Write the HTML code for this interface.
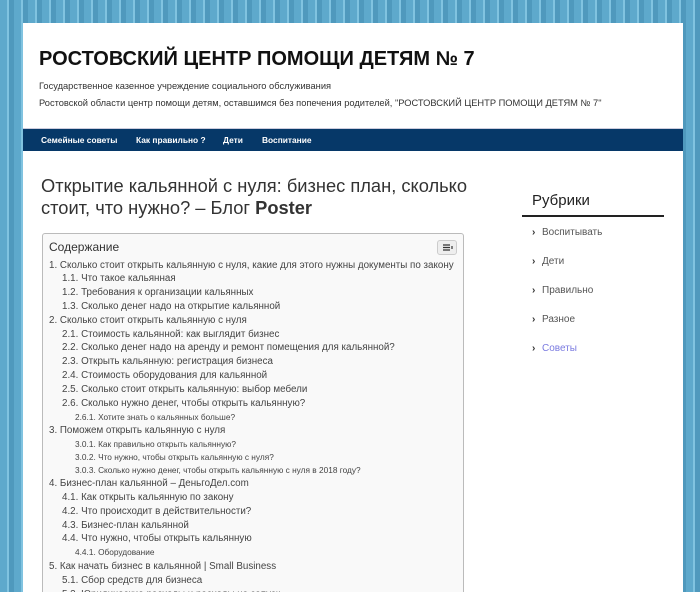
<!DOCTYPE html>
<html><head><meta charset="utf-8"><style>
*{margin:0;padding:0;box-sizing:border-box}
html,body{width:700px;height:592px;overflow:hidden}
body{position:relative;font-family:"Liberation Sans",sans-serif;
background:repeating-linear-gradient(90deg,#5ea9cc 0,#5ea9cc 7px,#80c3e0 7px,#80c3e0 9px,#4f99bd 9px,#4f99bd 14px);}
.page{position:absolute;left:23px;top:23px;width:660px;height:569px;background:#fff;overflow:hidden}
h1{position:absolute;left:16px;top:25px;font-size:20px;font-weight:bold;color:#111}
.d{position:absolute;left:16px;font-size:9.3px;color:#333}
.nav{position:absolute;left:0;top:105px;width:660px;height:23px;background:#063868;border-top:1px solid #ccd}
.nav span{position:absolute;top:6px;font-size:8.4px;font-weight:bold;color:#fff}
.t{position:absolute;left:18px;top:152px;font-size:18.3px;color:#333;line-height:22px;width:445px}
.toc{position:absolute;left:19px;top:210px;width:422px;height:400px;background:#f9f9f9;border:1px solid #bbb;border-radius:3px}
.toc h3{position:absolute;left:6px;top:6px;font-size:12px;font-weight:normal;color:#333}
.btn{position:absolute;left:394px;top:6px;width:20px;height:15px;border:1px solid #ccc;border-radius:3px;background:#eee}
.toc div.i{position:absolute;font-size:9.8px;color:#444;white-space:nowrap}
.toc div.s{font-size:8.3px}
.side{position:absolute;left:532px;top:192px;font-size:15px;font-weight:normal;color:#222}
.bar{position:absolute;left:522px;top:215px;width:142px;height:2px;background:#222}
.li{position:absolute;left:542px;font-size:10px;color:#555}
.li:before{content:"›";position:absolute;left:-10px;font-weight:bold;color:#333}
</style></head><body>
<div class="page">
<h1>РОСТОВСКИЙ ЦЕНТР ПОМОЩИ ДЕТЯМ № 7</h1>
<div class="d" style="top:58px">Государственное казенное учреждение социального обслуживания</div>
<div class="d" style="top:75px">Ростовской области центр помощи детям, оставшимся без попечения родителей, "РОСТОВСКИЙ ЦЕНТР ПОМОЩИ ДЕТЯМ № 7"</div>
<div class="nav"><span style="left:18px">Семейные советы</span><span style="left:113px">Как правильно ?</span><span style="left:200px">Дети</span><span style="left:239px">Воспитание</span></div>
<div class="t">Открытие кальянной с нуля: бизнес план, сколько стоит, что нужно? – Блог <b>Poster</b></div>
<div class="toc"><h3>Содержание</h3><div class="btn"><svg width="18" height="13"><g stroke="#333" stroke-width="1.2"><path d="M5 4h7M5 6.5h7M5 9h7M14 5v3"/></g></svg></div>
<div class="i" style="left:6px;top:26px">1. Сколько стоит открыть кальянную с нуля, какие для этого нужны документы по закону</div>
<div class="i" style="left:19px;top:39px">1.1. Что такое кальянная</div>
<div class="i" style="left:19px;top:53px">1.2. Требования к организации кальянных</div>
<div class="i" style="left:19px;top:67px">1.3. Сколько денег надо на открытие кальянной</div>
<div class="i" style="left:6px;top:81px">2. Сколько стоит открыть кальянную с нуля</div>
<div class="i" style="left:19px;top:95px">2.1. Стоимость кальянной: как выглядит бизнес</div>
<div class="i" style="left:19px;top:108px">2.2. Сколько денег надо на аренду и ремонт помещения для кальянной?</div>
<div class="i" style="left:19px;top:122px">2.3. Открыть кальянную: регистрация бизнеса</div>
<div class="i" style="left:19px;top:136px">2.4. Стоимость оборудования для кальянной</div>
<div class="i" style="left:19px;top:150px">2.5. Сколько стоит открыть кальянную: выбор мебели</div>
<div class="i" style="left:19px;top:164px">2.6. Сколько нужно денег, чтобы открыть кальянную?</div>
<div class="i s" style="left:32px;top:178px">2.6.1. Хотите знать о кальянных больше?</div>
<div class="i" style="left:6px;top:191px">3. Поможем открыть кальянную с нуля</div>
<div class="i s" style="left:32px;top:205px">3.0.1. Как правильно открыть кальянную?</div>
<div class="i s" style="left:32px;top:218px">3.0.2. Что нужно, чтобы открыть кальянную с нуля?</div>
<div class="i s" style="left:32px;top:231px">3.0.3. Сколько нужно денег, чтобы открыть кальянную с нуля в 2018 году?</div>
<div class="i" style="left:6px;top:244px">4. Бизнес-план кальянной – ДеньгоДел.com</div>
<div class="i" style="left:19px;top:258px">4.1. Как открыть кальянную по закону</div>
<div class="i" style="left:19px;top:272px">4.2. Что происходит в действительности?</div>
<div class="i" style="left:19px;top:286px">4.3. Бизнес-план кальянной</div>
<div class="i" style="left:19px;top:299px">4.4. Что нужно, чтобы открыть кальянную</div>
<div class="i s" style="left:32px;top:313px">4.4.1. Оборудование</div>
<div class="i" style="left:6px;top:327px">5. Как начать бизнес в кальянной | Small Business</div>
<div class="i" style="left:19px;top:341px">5.1. Сбор средств для бизнеса</div>
<div class="i" style="left:19px;top:355px">5.2. Юридические расходы и расходы на запуск</div>
</div>
</div>
<div class="side">Рубрики</div>
<div class="bar"></div>
<div class="li" style="top:227px">Воспитывать</div>
<div class="li" style="top:256px">Дети</div>
<div class="li" style="top:285px">Правильно</div>
<div class="li" style="top:314px">Разное</div>
<div class="li" style="top:343px;color:#7a7ae0">Советы</div>
</body></html>
